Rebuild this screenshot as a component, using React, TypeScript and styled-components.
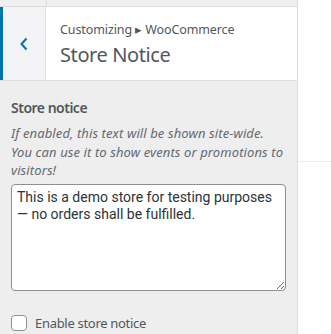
import React from 'react';
import styled, { createGlobalStyle } from 'styled-components';

const GlobalStyle = createGlobalStyle`
  html, body {
    margin: 0;
    padding: 0;
    background: #fff;
  }
  body {
    font-family: "Noto Sans", sans-serif;
    color: #50575e;
  }
`;

const Page = styled.div`
  display: flex;
  width: 331px;
  height: 334px;
  overflow: hidden;
`;

const Sidebar = styled.div`
  width: 297px;
  flex-shrink: 0;
  background: #eeeeee;
  border-right: 1px solid #dddddd;
  display: flex;
  flex-direction: column;
`;

const Preview = styled.div`
  flex: 1;
  background: #fff;
  padding-top: 161px;
`;

const PreviewRule = styled.div`
  height: 1px;
  background: #eeeeee;
`;

const TopStrip = styled.div`
  display: flex;
  height: 6px;
  border-bottom: 1px solid #dddddd;
`;

const StripCell = styled.div<{ $w?: number }>`
  width: ${({ $w }) => ($w ? `${$w}px` : 'auto')};
  flex: ${({ $w }) => ($w ? 'none' : '1')};
  background: #f0f0f1;
  border-right: ${({ $w }) => ($w ? '1px solid #dddddd' : 'none')};
`;

const Header = styled.div`
  display: flex;
  height: 73px;
  border-bottom: 1px solid #dddddd;
`;

const BackButton = styled.button`
  width: 46px;
  flex-shrink: 0;
  background: #f3f3f5;
  border: none;
  border-left: 3px solid #0073aa;
  border-right: 1px solid #dddddd;
  padding: 0;
  display: flex;
  align-items: center;
  justify-content: center;
  cursor: pointer;
`;

const TitleBox = styled.div`
  flex: 1;
  background: #fff;
  padding: 13px 0 0 14px;
`;

const Breadcrumb = styled.div`
  font-size: 12.5px;
  letter-spacing: -0.1px;
  line-height: 20px;
  color: #50575e;
`;

const Title = styled.div`
  font-size: 20px;
  letter-spacing: -0.4px;
  line-height: 28px;
  margin-top: 1px;
  color: #50575e;
`;

const Content = styled.div`
  padding: 17px 11px 0 11px;
`;

const Label = styled.div`
  font-size: 14px;
  font-weight: 600;
  letter-spacing: -0.5px;
  line-height: 20px;
  color: #50575e;
`;

const Description = styled.div`
  font-size: 13px;
  font-style: italic;
  letter-spacing: 0.1px;
  line-height: 18.5px;
  margin-top: 6px;
  color: #646970;
`;

const TextArea = styled.textarea`
  display: block;
  box-sizing: border-box;
  width: 275px;
  height: 107px;
  margin-top: 4px;
  padding: 4px 5px;
  font-family: Roboto, sans-serif;
  font-size: 14px;
  line-height: 17px;
  color: #2c3338;
  background: #fff;
  border: 1px solid #8c8f94;
  border-radius: 4px;
  resize: vertical;
  outline: none;
`;

const CheckRow = styled.label`
  display: flex;
  align-items: center;
  gap: 8px;
  margin-top: 23px;
  font-size: 13px;
  letter-spacing: -0.3px;
  color: #50575e;
`;

const Check = styled.span`
  width: 16px;
  height: 16px;
  box-sizing: border-box;
  border: 1px solid #8c8f94;
  border-radius: 4px;
  background: #fff;
`;

const App: React.FC = () => {
  return (
    <>
      <GlobalStyle />
      <Page>
        <Sidebar>
          <TopStrip>
            <StripCell $w={46} />
            <StripCell />
          </TopStrip>
          <Header>
            <BackButton aria-label="Back">
              <svg width="10" height="14" viewBox="0 0 10 14">
                <path d="M7.5 1.5 L2.5 7 L7.5 12.5" fill="none" stroke="#0073aa" strokeWidth="2" />
              </svg>
            </BackButton>
            <TitleBox>
              <Breadcrumb>Customizing ▸ WooCommerce</Breadcrumb>
              <Title>Store Notice</Title>
            </TitleBox>
          </Header>
          <Content>
            <Label>Store notice</Label>
            <Description>
              If enabled, this text will be shown site-wide. You can use it to show events or promotions to visitors!
            </Description>
            <TextArea
              defaultValue="This is a demo store for testing purposes — no orders shall be fulfilled."
            />
            <CheckRow>
              <Check />
              Enable store notice
            </CheckRow>
          </Content>
        </Sidebar>
        <Preview>
          <PreviewRule />
        </Preview>
      </Page>
    </>
  );
};

export default App;
